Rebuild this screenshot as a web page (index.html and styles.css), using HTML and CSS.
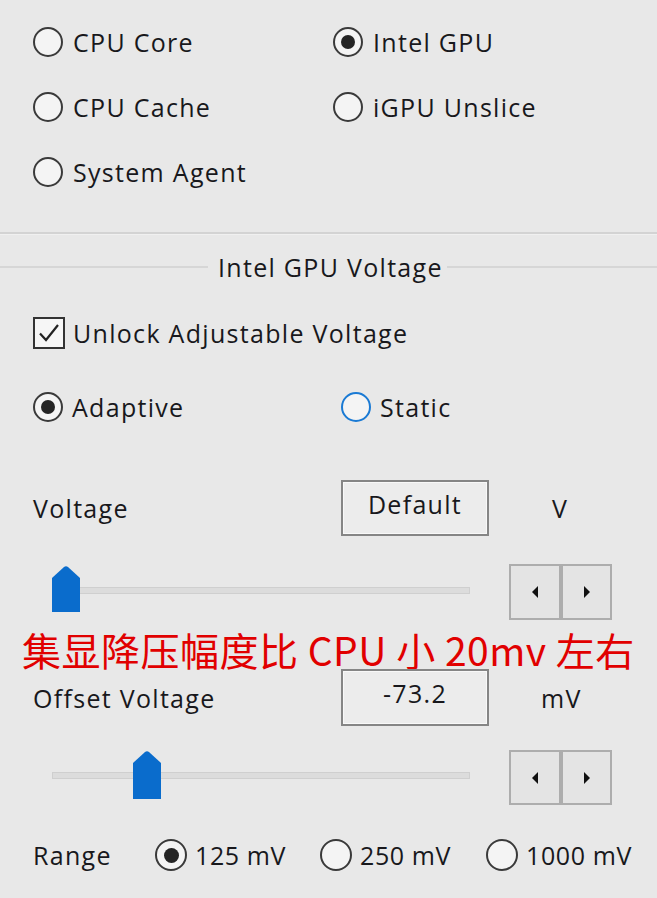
FILE: index.html
```html
<!DOCTYPE html>
<html>
<head>
<meta charset="utf-8">
<link rel="stylesheet" href="styles.css">
</head>
<body>
<div class="page">
  <div class="options">
    <div class="opt"><span class="radio"></span><span>CPU Core</span></div>
    <div class="opt"><span class="radio checked"></span><span>Intel GPU</span></div>
    <div class="opt"><span class="radio"></span><span>CPU Cache</span></div>
    <div class="opt"><span class="radio"></span><span>iGPU Unslice</span></div>
    <div class="opt"><span class="radio"></span><span>System Agent</span></div>
  </div>
  <div class="sep"></div>
  <div class="legend"><span class="legend-line short"></span><span class="legend-text">Intel GPU Voltage</span><span class="legend-line grow"></span></div>
  <div class="check-row">
    <span class="checkbox"><svg width="28" height="28" viewBox="0 0 28 28"><path d="M5 14.5 L11 21 L23 6" fill="none" stroke="#222" stroke-width="2.2"/></svg></span>
    <span>Unlock Adjustable Voltage</span>
  </div>
  <div class="mode-row">
    <div class="opt"><span class="radio checked"></span><span>Adaptive</span></div>
    <div class="opt"><span class="radio focus"></span><span>Static</span></div>
  </div>
  <div class="value-row first">
    <span class="label">Voltage</span>
    <span class="box">Default</span>
    <span class="unit unit-v">V</span>
  </div>
  <div class="slider-row s1">
    <div class="slider">
      <div class="track"></div>
      <svg class="thumb t1" width="28" height="46" viewBox="0 0 28 46"><path d="M0 12 L12 1 Q14 -0.5 16 1 L28 12 L28 46 L0 46 Z" fill="#0a6ccc"/></svg>
    </div>
    <div class="spin">
      <span class="spin-btn"><svg width="10" height="14" viewBox="0 0 10 14"><path d="M8 1 L2 7 L8 13 Z" fill="#111"/></svg></span>
      <span class="spin-btn"><svg width="10" height="14" viewBox="0 0 10 14"><path d="M2 1 L8 7 L2 13 Z" fill="#111"/></svg></span>
    </div>
  </div>
  <div class="note">集显降压幅度比 CPU 小 20mv 左右</div>
  <div class="value-row">
    <span class="label">Offset Voltage</span>
    <span class="box">-73.2</span>
    <span class="unit unit-mv">mV</span>
  </div>
  <div class="slider-row s2">
    <div class="slider">
      <div class="track"></div>
      <svg class="thumb t2" width="28" height="48" viewBox="0 0 28 48"><path d="M0 12 L12 1 Q14 -0.5 16 1 L28 12 L28 48 L0 48 Z" fill="#0a6ccc"/></svg>
    </div>
    <div class="spin">
      <span class="spin-btn"><svg width="10" height="14" viewBox="0 0 10 14"><path d="M8 1 L2 7 L8 13 Z" fill="#111"/></svg></span>
      <span class="spin-btn"><svg width="10" height="14" viewBox="0 0 10 14"><path d="M2 1 L8 7 L2 13 Z" fill="#111"/></svg></span>
    </div>
  </div>
  <div class="range-row">
    <span class="label">Range</span>
    <div class="opt"><span class="radio big checked"></span><span>125 mV</span></div>
    <div class="opt"><span class="radio big"></span><span>250 mV</span></div>
    <div class="opt"><span class="radio big"></span><span>1000 mV</span></div>
  </div>
</div>
</body>
</html>
```
FILE: styles.css
```css
html, body {
  margin: 0;
  padding: 0;
  background: #e8e8e8;
}
.page {
  width: 657px;
  height: 898px;
  overflow: hidden;
  font-family: "Open Sans", "Noto Sans", sans-serif;
  font-size: 25px;
  letter-spacing: 1.3px;
  color: #18181c;
}
.options {
  display: grid;
  grid-template-columns: 300px auto;
  row-gap: 35px;
  padding: 27px 0 0 33px;
}
.opt {
  display: flex;
  align-items: center;
  gap: 10px;
  height: 30px;
  line-height: 30px;
}
.radio {
  width: 26px;
  height: 26px;
  flex: none;
  border: 2px solid #3a3a3a;
  border-radius: 50%;
  background: #f4f4f4;
  position: relative;
}
.radio.big {
  width: 28px;
  height: 28px;
}
.radio.checked::after {
  content: "";
  position: absolute;
  left: 50%;
  top: 50%;
  width: 14px;
  height: 14px;
  margin: -7px 0 0 -7px;
  border-radius: 50%;
  background: #252525;
}
.radio.big.checked::after {
  width: 15px;
  height: 15px;
  margin: -7.5px 0 0 -7.5px;
}
.radio.focus {
  border-color: #1a7ad4;
}
.sep {
  margin-top: 45px;
  height: 0;
  border-top: 2px solid #d3d3d3;
  border-bottom: 1px solid #f0f0f0;
}
.legend {
  margin-top: 17px;
  display: flex;
  align-items: center;
  height: 30px;
}
.legend-line {
  height: 0;
  border-top: 2px solid #d6d6d6;
}
.legend-line.short {
  width: 208px;
}
.legend-line.grow {
  flex: 1;
}
.legend-text {
  padding: 0 4px 0 10px;
  line-height: 30px;
}
.check-row {
  margin-top: 35px;
  padding-left: 33px;
  display: flex;
  align-items: center;
  gap: 8px;
  height: 32px;
}
.checkbox {
  width: 28px;
  height: 28px;
  border: 2px solid #333;
  background: #f6f6f6;
  display: flex;
  align-items: center;
  justify-content: center;
}
.mode-row {
  margin-top: 43px;
  padding-left: 33px;
  display: grid;
  grid-template-columns: 308px auto;
}
.mode-row .opt {
  gap: 9px;
}
.value-row {
  margin-top: 0;
  padding-left: 33px;
  display: flex;
  align-items: center;
  height: 57px;
}
.value-row.first {
  margin-top: 58px;
  height: 56px;
}
.label {
  width: 308px;
  flex: none;
}
.box {
  box-sizing: border-box;
  width: 148px;
  height: 100%;
  border: 2px solid #858585;
  background: #ececec;
  box-shadow: inset 0 0 0 1px #f8f8f8;
  text-align: center;
  line-height: 44px;
  flex: none;
}
.unit-v {
  margin-left: 63px;
}
.unit-mv {
  margin-left: 52px;
}
.slider-row {
  display: flex;
  align-items: flex-start;
}
.slider-row.s1 {
  margin-top: 28px;
  height: 56px;
}
.slider-row.s2 {
  margin-top: 24px;
  height: 55px;
}
.slider {
  position: relative;
  margin-left: 52px;
  width: 418px;
  height: 100%;
}
.track {
  position: absolute;
  left: 0;
  right: 0;
  top: 23px;
  height: 5px;
  background: #dcdcdc;
  border: 1px solid #cfcfcf;
}
.s2 .track {
  top: 22px;
}
.thumb {
  position: absolute;
  display: block;
}
.thumb.t1 {
  left: 0;
  top: 2px;
}
.thumb.t2 {
  left: 81px;
  top: 1px;
}
.spin {
  margin-left: 39px;
  display: flex;
  height: 100%;
}
.spin-btn {
  box-sizing: border-box;
  width: 52px;
  height: 100%;
  border: 2px solid #adadad;
  background: #e4e4e4;
  display: flex;
  align-items: center;
  justify-content: center;
}
.spin-btn + .spin-btn {
  margin-left: -1px;
  border-left-width: 3px;
}
.note {
  margin-top: 9px;
  padding-left: 22px;
  height: 40px;
  line-height: 40px;
  font-family: "Noto Sans CJK SC", "Noto Sans", sans-serif;
  font-size: 39px;
  font-weight: 400;
  letter-spacing: 0.5px;
  color: #e10000;
  white-space: nowrap;
}
.range-row {
  margin-top: 33px;
  padding-left: 33px;
  display: grid;
  grid-template-columns: 122px 165px 166px auto;
  align-items: center;
  height: 32px;
}
.range-row .opt {
  gap: 8px;
  height: 32px;
}
.range-row .opt span:last-child {
  letter-spacing: 0.6px;
}
```
